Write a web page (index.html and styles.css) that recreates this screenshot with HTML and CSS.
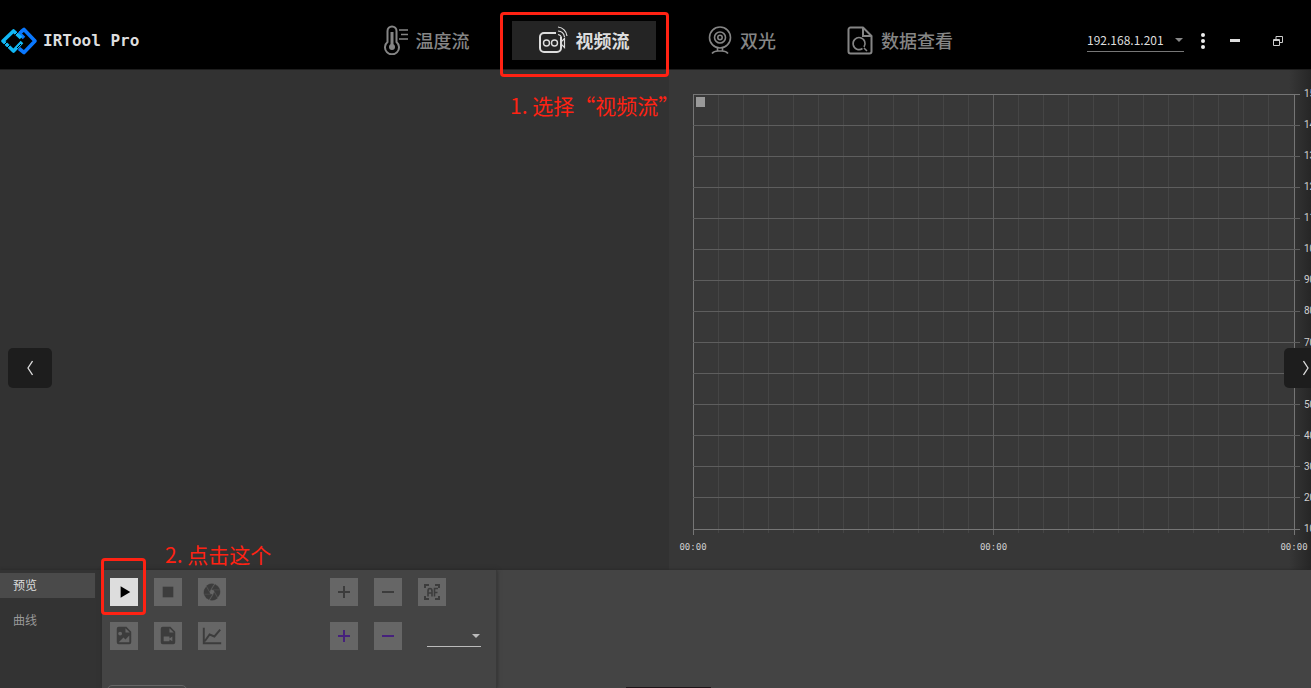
FILE: index.html
```html
<!DOCTYPE html>
<html lang="zh-CN">
<head>
    <meta charset="UTF-8">
    <meta name="viewport" content="width=device-width, initial-scale=1.0">
    <title>IRTool Pro</title>
    <link rel="stylesheet" href="styles.css">
</head>
<body>

    <!-- Title bar -->
    <header class="topbar">
        <div class="brand">
            <svg width="37" height="28" viewBox="0 0 37 28" fill="none" stroke-width="3.600">
                <path d="M18 6.500L23 2.500L34 14L23 25.500L18 21.500" stroke="#0a78ff" stroke-linejoin="round"/>
                <path d="M18 6L23 11" stroke="#0a78ff"/>
                <path d="M20 11L12.500 4L2 14L12.500 24L21 15" stroke="#12b8f5" stroke-linejoin="round"/>
                <path d="M3 18l5-5M6 21l5-5M14 8l5-5M16 21l4-4" stroke="#000" stroke-width="1"/>
            </svg>
            <span>IRTool Pro</span>
        </div>

        <nav class="modes">
            <button class="mode">
                <svg width="25" height="30" viewBox="0 0 25 30" fill="none" stroke="currentColor" stroke-width="2">
                    <path d="M4.500 17V6a4.500 4.500 0 0 1 9 0v11a7 7 0 1 1-9 0z"/>
                    <path d="M9 7v15" stroke-width="3"/>
                    <circle cx="9" cy="22" r="3" fill="currentColor" stroke="none"/>
                    <path d="M16 5h9M18 9.500h7M16 14h9" stroke-width="1.500"/>
                </svg>
                温度流
            </button>
            <div class="step step-mode">
                <button class="mode active">
                    <svg width="29" height="28" viewBox="0 0 29 28" fill="none" stroke="currentColor" stroke-width="2">
                        <path d="M17 7H5a4 4 0 0 0-4 4v11a4 4 0 0 0 4 4h13a4 4 0 0 0 4-4V11"/>
                        <circle cx="7.500" cy="17" r="3" stroke-width="1.400"/>
                        <circle cx="15.500" cy="17" r="3" stroke-width="1.400"/>
                        <path d="M25.500 12.500v9l-3-3v-3z" stroke-width="1.200"/>
                        <path d="M19 8.500a4 4 0 0 1 3.500 3.500M19 5a7 7 0 0 1 6.500 6M19 1a10 10 0 0 1 9 9" stroke-width="1.200"/>
                    </svg>
                    视频流
                </button>
                <span class="note">1. 选择“视频流”</span>
            </div>
            <button class="mode">
                <svg width="24" height="30" viewBox="0 0 24 30" fill="none" stroke="currentColor" stroke-width="1.600">
                    <circle cx="12" cy="12.500" r="10.500"/>
                    <circle cx="12" cy="12.500" r="5.500"/>
                    <circle cx="12" cy="12.500" r="2.200"/>
                    <path d="M9.500 23v3M14.500 23v3M4 28.500q2-2.500 6-2.500h4q4 0 6 2.500"/>
                </svg>
                双光
            </button>
            <button class="mode">
                <svg width="26" height="29" viewBox="0 0 26 29" fill="none" stroke="currentColor" stroke-width="2">
                    <path d="M16 1.500H3.500a2 2 0 0 0-2 2v22a2 2 0 0 0 2 2h19a2 2 0 0 0 2-2V10z" stroke-linejoin="round"/>
                    <path d="M16 2v8h8"/>
                    <path d="M15.500 22.500a6 6 0 1 1 1.500-1.500M17 22l3 3" stroke-width="1.600"/>
                </svg>
                数据查看
            </button>
        </nav>

        <div class="window-tools">
            <div class="picker ip">
                <select aria-label="设备 IP">
                    <option>192.168.1.201</option>
                </select>
            </div>
            <button class="more" aria-label="更多">
                <svg width="4" height="16" viewBox="0 0 4 16" fill="#eee">
                    <circle cx="2" cy="2" r="2"/><circle cx="2" cy="8" r="2"/><circle cx="2" cy="14" r="2"/>
                </svg>
            </button>
            <button class="win" aria-label="最小化">
                <svg width="10" height="3"><rect width="10" height="3" fill="#ddd"/></svg>
            </button>
            <button class="win" aria-label="还原">
                <svg width="10" height="10" viewBox="0 0 10 10" fill="none" stroke="#ccc">
                    <path d="M3 3V.5h6.500v6H7M.5 3.500h6v6h-6zM.5 4.500h6"/>
                </svg>
            </button>
        </div>
    </header>

    <!-- Video on the left, temperature curve on the right -->
    <main class="stage">
        <section class="video"></section>
        <section class="chart">
            <div class="plot">
                <svg class="grid" id="grid" width="100%" height="100%"></svg>
                <span class="legend"></span>
                <div class="y-labels" id="y-labels"></div>
                <div class="x-labels">
                    <span>00:00</span>
                    <span>00:00</span>
                    <span>00:00</span>
                </div>
            </div>
        </section>
    </main>

    <!-- Bottom tools -->
    <footer class="dock">
        <div class="tabs">
            <button class="tab active">预览</button>
            <button class="tab">曲线</button>
        </div>
        <section class="controls">
            <div class="tool-groups">
                <div class="tools">
                    <div class="step step-play">
                        <button class="tool play" aria-label="播放">
                            <svg viewBox="0 0 29 29"><path d="M11 8.500v12l10-6z"/></svg>
                        </button>
                        <span class="note">2. 点击这个</span>
                    </div>
                    <button class="tool" aria-label="停止">
                        <svg viewBox="0 0 29 29"><path d="M9 9h11v11H9z"/></svg>
                    </button>
                    <button class="tool" aria-label="拍照">
                        <svg viewBox="0 0 24 24">
                            <path d="M9.400 10.500l4.770-8.260a10 10 0 0 0-8.800 2.240l3.960 6.860zM21.540 9a10 10 0 0 0-5.950-6.330L11.850 9zM21.800 10h-7.490l4.760 8.250A10 10 0 0 0 21.800 10zM8.540 12L4.930 5.750A10 10 0 0 0 2.200 14h7.490zM2.460 15a10 10 0 0 0 5.950 6.330L12.150 15zM13.730 15l-3.900 6.760a10 10 0 0 0 8.800-2.240l-3.960-6.860z" transform="translate(3.600 3.600) scale(.7)" stroke="#3c3c3c" stroke-width=".6"/>
                        </svg>
                    </button>
                    <button class="tool" aria-label="图片文件">
                        <svg viewBox="0 0 29 29">
                            <path fill-rule="evenodd" d="M9 5h8l5 5v11a2 2 0 0 1-2 2H9a2 2 0 0 1-2-2V7a2 2 0 0 1 2-2zM16 6.500V11h4.500zM9 21h11v-7l-4 4-2-2zM8.500 12a2 2 0 1 0 4 0 2 2 0 0 0-4 0z"/>
                        </svg>
                    </button>
                    <button class="tool" aria-label="视频文件">
                        <svg viewBox="0 0 29 29">
                            <path fill-rule="evenodd" d="M9 5h8l5 5v11a2 2 0 0 1-2 2H9a2 2 0 0 1-2-2V7a2 2 0 0 1 2-2zM16 6.500V11h4.500zM10 15v5h6v-2l3 2v-5l-3 2v-2z"/>
                        </svg>
                    </button>
                    <button class="tool" aria-label="曲线图">
                        <svg viewBox="0 0 29 29" fill="none" stroke="#3c3c3c" stroke-width="2"><path d="M6 6v16h18M7 20l5-7 5 2 6-7"/></svg>
                    </button>
                </div>
                <div class="tools">
                    <button class="tool" aria-label="放大">
                        <svg viewBox="0 0 28 28"><path d="M8 14h12M14 8v12" stroke="#3c3c3c" stroke-width="2"/></svg>
                    </button>
                    <button class="tool" aria-label="缩小">
                        <svg viewBox="0 0 28 28"><path d="M8 14h12" stroke="#3c3c3c" stroke-width="2"/></svg>
                    </button>
                    <button class="tool" aria-label="自动对焦">
                        <svg viewBox="0 0 28 28" fill="none" stroke="#3c3c3c" stroke-width="2">
                            <path d="M7 10V7h4M17 7h4v3M21 18v3h-4M11 21H7v-3"/>
                            <path d="M10 18.500V13q0-2.500 2-2.500t2 2.500v5.500M10 15h4M16.500 18.500v-8h3.500M16.500 14.500h3" stroke-width="1.600"/>
                        </svg>
                    </button>
                    <button class="tool" aria-label="增加">
                        <svg viewBox="0 0 28 28"><path d="M8 14h12M14 8v12" stroke="#46217c" stroke-width="2"/></svg>
                    </button>
                    <button class="tool" aria-label="减少">
                        <svg viewBox="0 0 28 28"><path d="M8 14h12" stroke="#46217c" stroke-width="2"/></svg>
                    </button>
                    <div class="picker level">
                        <select aria-label="级别"><option></option></select>
                    </div>
                </div>
            </div>
            <div class="outline"></div>
        </section>
        <section class="details"></section>
    </footer>

    <button class="slide prev" aria-label="上一张">
        <svg width="6" height="16" viewBox="0 0 6 16"><path d="M5.500 1L1 8l4.500 7"/></svg>
    </button>
    <button class="slide next" aria-label="下一张">
        <svg width="6" height="16" viewBox="0 0 6 16"><path d="M.5 1L5 8L.5 15"/></svg>
    </button>
    <div class="handle"></div>

    <script src="chart.js"></script>
</body>
</html>
```

FILE: styles.css
```css
* { box-sizing: border-box; }
body { margin: 0; height: 100vh; display: flex; flex-direction: column; position: relative; overflow: hidden; background: #333; color: #ddd; font-family: "Noto Sans CJK SC", sans-serif; }
button, select { font-family: inherit; border: none; padding: 0; cursor: pointer; }
svg { display: block; flex: none; }

/* Title bar */
.topbar { height: 70px; display: flex; align-items: center; background: #000; border-bottom: 1px solid #1e1e1e; position: relative; z-index: 2; }
.brand { width: 239px; padding-left: 1px; display: flex; align-items: center; gap: 5px; font: bold 16px "DejaVu Sans Mono", monospace; }
.brand, .window-tools { flex: none; height: 100%; padding-top: 12px; }
.modes { flex: 1; display: flex; justify-content: center; gap: 14px; padding-top: 11px; }
.mode { width: 144px; height: 39px; display: flex; align-items: center; justify-content: center; gap: 8px; background: none; color: #858585; font-size: 18px; font-weight: 500; }
.mode.active { background: #242424; color: #ddd; font-weight: 700; }
.window-tools { width: 224px; display: flex; align-items: center; }
.more, .win { height: 28px; display: flex; align-items: center; justify-content: center; background: none; }
.more { width: 20px; margin-left: 9px; }
.win { width: 43px; }

/* Drop-downs */
.picker { position: relative; }
.picker select { appearance: none; width: 100%; height: 100%; padding-bottom: 2px; display: block; background: none; color: #ddd; font-size: 12px; }
.picker::after { content: ""; position: absolute; right: 1px; top: 50%; margin-top: -2px; border: 4px solid transparent; border-top-color: #888; border-bottom: none; pointer-events: none; }
.ip { width: 97px; height: 22px; border-bottom: 1px solid #777; }
.level { width: 54px; height: 25px; margin-left: 9px; border-bottom: 1px solid #bbb; }
.level::after { border-top-color: #bbb; margin-top: 0; }

/* Red marks */
.step { position: relative; }
.step::after { content: ""; position: absolute; border: 3px solid #ff2213; border-radius: 4px; pointer-events: none; }
.step-mode::after { inset: -9px -13px -17px -12px; }
.step-play::after { inset: -20px -8px -9px -9px; }
.note { position: absolute; color: #ff2213; font-size: 21px; line-height: 30px; white-space: nowrap; }
.step-mode .note { left: -2px; top: 69px; }
.step-play .note { left: 55px; top: -39px; }

/* Main area */
.stage { flex: 1; display: grid; grid-template-columns: minmax(0, 669fr) minmax(0, 642fr); min-height: 0; }
.video { background: #323232; }
.chart { background: linear-gradient(to left, #262626, #373737 22px); padding: 24px 17px 41px 24px; }
.plot { position: relative; height: 100%; background: #383838; }
.grid { overflow: visible; shape-rendering: crispEdges; }
.grid .minor { stroke: #454545; }
.grid .major { stroke: #5e5e5e; }
.grid .edge { stroke: #757575; }
.legend { position: absolute; left: 3px; top: 3px; width: 9px; height: 10px; background: #999; }
.y-labels, .x-labels { position: absolute; display: flex; justify-content: space-between; color: #d0d0d0; }
.y-labels { left: 100%; top: 0; bottom: 0; flex-direction: column; padding-left: 10px; font: 10px Roboto, sans-serif; }
.y-labels span { height: 0; line-height: 0; }
.x-labels { left: 0; right: 0; top: 100%; padding-top: 12px; font: 9px/12px "DejaVu Sans Mono", monospace; }
.x-labels span { width: 0; display: flex; justify-content: center; }

/* Bottom tools */
.dock { height: 118px; display: flex; background: #444; box-shadow: 0 0 3px #262626; }
.tabs { width: 102px; padding: 3px 7px 0 0; display: flex; flex-direction: column; gap: 10px; background: #333; }
.tab { height: 25px; padding: 0 0 2px 13px; background: none; color: #999; font-size: 12px; text-align: left; }
.tab.active { background: #4a4a4a; color: #ddd; }
.controls { width: 395px; padding: 8px 5px 0; border-right: 1px solid #393939; box-shadow: 0 0 4px #2b2b2b; }
.tool-groups { display: flex; gap: 104px; padding-left: 3px; }
.tools { display: grid; grid-template-columns: repeat(3, 28px); grid-auto-rows: 28px; gap: 16px; }
.tool { width: 28px; height: 28px; background: #666; fill: #3c3c3c; }
.tool.play { background: #ddd; fill: #000; }
.outline { width: 80px; height: 28px; margin-top: 35px; border: 1px solid #666; border-radius: 5px; }
.details { flex: 1; }

/* Floating buttons over the page */
.slide { position: absolute; top: 348px; width: 44px; height: 40px; display: flex; align-items: center; justify-content: center; border-radius: 5px; background: #1d1d1d; z-index: 3; }
.slide svg { fill: none; stroke: #ddd; stroke-width: 1.3; }
.prev { left: 8px; }
.next { right: -17px; }
.handle { position: absolute; left: 50%; bottom: 0; width: 85px; height: 1px; margin-left: -30px; background: #1c1518; }
```

FILE: chart.js
```js
const grid = document.getElementById("grid");
const yLabels = document.getElementById("y-labels");
const columns = 24;
const rows = 14;

function addLine(x1, y1, x2, y2, name) {
    const line = document.createElementNS("http://www.w3.org/2000/svg", "line");
    line.setAttribute("x1", x1);
    line.setAttribute("y1", y1);
    line.setAttribute("x2", x2);
    line.setAttribute("y2", y2);
    line.setAttribute("class", name);
    grid.appendChild(line);
}

// Tick that hangs below the plot
function addTick(x, length, name) {
    const tick = document.createElementNS("http://www.w3.org/2000/svg", "svg");
    tick.setAttribute("x", x);
    tick.setAttribute("y", "100%");
    tick.setAttribute("overflow", "visible");
    tick.innerHTML = '<line y2="' + length + '" class="' + name + '"/>';
    grid.appendChild(tick);
}

for (let i = 0; i <= columns; i++) {
    const x = i * 100 / columns + "%";
    const name = i % columns === 0 ? "edge" : i === 12 ? "major" : "minor";
    addLine(x, 0, x, "100%", name);
    addTick(x, i % 12 === 0 ? 6 : 4, name);
}

for (let i = 0; i <= rows; i++) {
    const y = i * 100 / rows + "%";
    addLine(0, y, "101%", y, i % rows === 0 ? "edge" : "major");

    const label = document.createElement("span");
    label.textContent = 150 - i * 10;
    yLabels.appendChild(label);
}
```
